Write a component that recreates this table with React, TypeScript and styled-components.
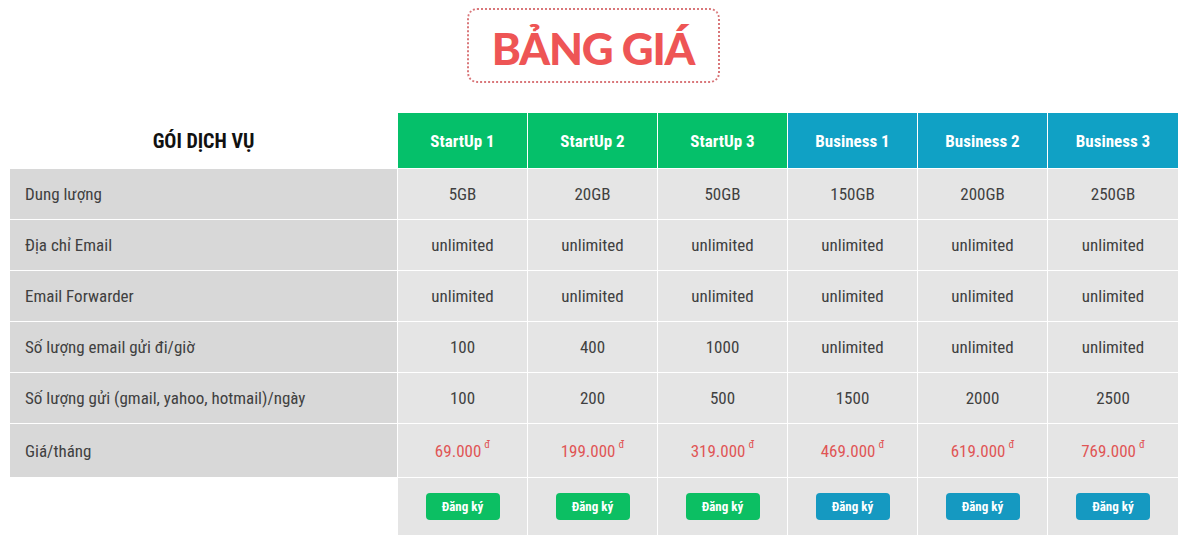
import React from "react";
import styled, { createGlobalStyle } from "styled-components";

const Global = createGlobalStyle`
  html, body { margin: 0; padding: 0; background: #fff; }
  body { font-family: "Roboto Condensed", "Liberation Sans Narrow", Roboto, sans-serif; }
`;

const Page = styled.div`
  padding: 8px 8px 0 9px;
  display: flex;
  flex-direction: column;
  align-items: flex-start;
`;

const TitleWrap = styled.div`
  width: 1168px;
  display: flex;
  justify-content: center;
`;

const TitleBox = styled.div`
  box-sizing: border-box;
  width: 253px;
  height: 75px;
  border: 2px dotted #d9777a;
  border-radius: 10px;
  display: flex;
  align-items: center;
  justify-content: center;
`;

const Title = styled.h1`
  margin: 0;
  font-family: Lato, "Open Sans", sans-serif;
  font-weight: 900;
  font-size: 44px;
  color: #ee5555;
  letter-spacing: -1.2px;
  padding-top: 4px;
`;

const Table = styled.table`
  margin-top: 29px;
  border-collapse: collapse;
  table-layout: fixed;
  width: 1169px;
`;

const HeadCell = styled.th<{ $tone?: "green" | "blue" }>`
  height: 55px;
  padding: 0;
  border: 1px solid #fff;
  background: ${(p) => (p.$tone === "green" ? "#05c06a" : p.$tone === "blue" ? "#10a1c5" : "#fff")};
  color: ${(p) => (p.$tone ? "#fff" : "#111")};
  font-size: ${(p) => (p.$tone ? "17px" : "20px")};
  font-weight: 700;
  text-align: center;
`;

const LabelCell = styled.td<{ $tall?: boolean }>`
  height: ${(p) => (p.$tall ? "53px" : "50px")};
  padding: 0 0 0 15px;
  border: 1px solid #fff;
  background: #d8d8d8;
  color: #404040;
  font-size: 17px;
  text-align: left;
`;

const Cell = styled.td<{ $tall?: boolean }>`
  height: ${(p) => (p.$tall ? "53px" : "50px")};
  padding: 0;
  border: 1px solid #fff;
  background: #e5e5e5;
  color: #404040;
  font-size: 17px;
  text-align: center;
`;

const BlankCell = styled.td`
  border: none;
  background: #fff;
`;

const ButtonCell = styled.td`
  height: 57px;
  padding: 0;
  border: 1px solid #fff;
  background: #e5e5e5;
  text-align: center;
`;

const Price = styled.span`
  color: #e05555;
  font-size: 17px;
`;

const Currency = styled.sup`
  font-size: 11px;
  margin-left: 3px;
  position: relative;
  top: -2px;
`;

const Button = styled.button<{ $tone: "green" | "blue" }>`
  width: 74px;
  height: 27px;
  border: none;
  border-radius: 4px;
  background: ${(p) => (p.$tone === "green" ? "#0cbf63" : "#1599c1")};
  color: #fff;
  font-family: inherit;
  font-weight: 700;
  font-size: 13px;
  cursor: pointer;
`;

const plans: { name: string; tone: "green" | "blue"; price: string }[] = [
  { name: "StartUp 1", tone: "green", price: "69.000" },
  { name: "StartUp 2", tone: "green", price: "199.000" },
  { name: "StartUp 3", tone: "green", price: "319.000" },
  { name: "Business 1", tone: "blue", price: "469.000" },
  { name: "Business 2", tone: "blue", price: "619.000" },
  { name: "Business 3", tone: "blue", price: "769.000" },
];

const rows: { label: string; values: string[] }[] = [
  { label: "Dung lượng", values: ["5GB", "20GB", "50GB", "150GB", "200GB", "250GB"] },
  { label: "Địa chỉ Email", values: Array(6).fill("unlimited") },
  { label: "Email Forwarder", values: Array(6).fill("unlimited") },
  { label: "Số lượng email gửi đi/giờ", values: ["100", "400", "1000", "unlimited", "unlimited", "unlimited"] },
  { label: "Số lượng gửi (gmail, yahoo, hotmail)/ngày", values: ["100", "200", "500", "1500", "2000", "2500"] },
];

const colWidths = [388, 130, 130, 130, 130, 130, 131];

export default function App() {
  return (
    <Page>
      <Global />
      <TitleWrap>
        <TitleBox>
          <Title>BẢNG GIÁ</Title>
        </TitleBox>
      </TitleWrap>
      <Table>
        <colgroup>
          {colWidths.map((w, i) => (
            <col key={i} style={{ width: w }} />
          ))}
        </colgroup>
        <thead>
          <tr>
            <HeadCell>GÓI DỊCH VỤ</HeadCell>
            {plans.map((p) => (
              <HeadCell key={p.name} $tone={p.tone}>
                {p.name}
              </HeadCell>
            ))}
          </tr>
        </thead>
        <tbody>
          {rows.map((r) => (
            <tr key={r.label}>
              <LabelCell>{r.label}</LabelCell>
              {r.values.map((v, i) => (
                <Cell key={i}>{v}</Cell>
              ))}
            </tr>
          ))}
          <tr>
            <LabelCell $tall>Giá/tháng</LabelCell>
            {plans.map((p) => (
              <Cell key={p.name} $tall>
                <Price>
                  {p.price}
                  <Currency>đ</Currency>
                </Price>
              </Cell>
            ))}
          </tr>
          <tr>
            <BlankCell />
            {plans.map((p) => (
              <ButtonCell key={p.name}>
                <Button $tone={p.tone}>Đăng ký</Button>
              </ButtonCell>
            ))}
          </tr>
        </tbody>
      </Table>
    </Page>
  );
}
